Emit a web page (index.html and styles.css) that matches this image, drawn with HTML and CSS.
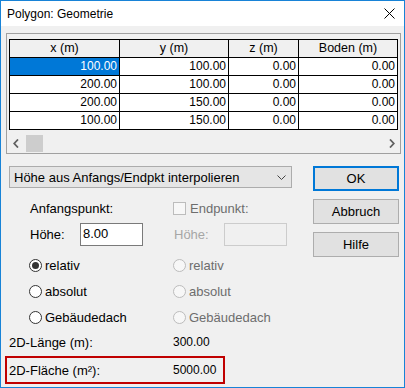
FILE: index.html
```html
<!DOCTYPE html>
<html lang="de">
<head>
  <meta charset="UTF-8" />
  <title>Polygon: Geometrie</title>
  <link rel="stylesheet" href="styles.css">
</head>
<body>
  <div class="window">
    <div class="titlebar">
      <span>Polygon: Geometrie</span>
      <svg class="close" width="11" height="11" viewBox="0 0 11 11">
        <path d="M0.5 0.5L10.5 10.5M10.5 0.5L0.5 10.5" stroke="#000" stroke-width="1" fill="none"/>
      </svg>
    </div>

    <div class="content">
      <div class="grid-box">
        <div class="table-wrap">
          <table class="points-table">
            <colgroup>
              <col style="width:110px"><col style="width:109px"><col style="width:70px"><col style="width:99px">
            </colgroup>
            <thead>
              <tr><th>x (m)</th><th>y (m)</th><th>z (m)</th><th>Boden (m)</th></tr>
            </thead>
            <tbody>
              <tr><td class="selected">100.00</td><td>100.00</td><td>0.00</td><td>0.00</td></tr>
              <tr><td>200.00</td><td>100.00</td><td>0.00</td><td>0.00</td></tr>
              <tr><td>200.00</td><td>150.00</td><td>0.00</td><td>0.00</td></tr>
              <tr><td>100.00</td><td>150.00</td><td>0.00</td><td>0.00</td></tr>
            </tbody>
          </table>
        </div>
        <div class="hscroll">
          <div class="arrow">
            <svg width="6" height="9" viewBox="0 0 6 9"><path d="M5 0.5L1.2 4.5L5 8.5" fill="none" stroke="#606060" stroke-width="1.8"/></svg>
          </div>
          <div class="thumb"></div>
          <div class="arrow right">
            <svg width="6" height="9" viewBox="0 0 6 9"><path d="M1 0.5L4.8 4.5L1 8.5" fill="none" stroke="#606060" stroke-width="1.8"/></svg>
          </div>
        </div>
      </div>

      <div class="lower">
        <div class="left">
          <div class="combo">
            <span>Höhe aus Anfangs/Endpkt interpolieren</span>
            <svg width="9" height="5" viewBox="0 0 9 5"><path d="M0.5 0.5L4.5 4.5L8.5 0.5" fill="none" stroke="#444" stroke-width="1"/></svg>
          </div>

          <div class="pt-row first">
            <span class="pad1">Anfangspunkt:</span>
            <label class="opt disabled"><span class="check"></span>Endpunkt:</label>
          </div>
          <div class="pt-row hoehe">
            <div class="field"><span class="field-label">Höhe:</span><span class="input">8.00</span></div>
            <div class="field disabled"><span class="field-label">Höhe:</span><span class="input off"></span></div>
          </div>
          <div class="pt-row gap11">
            <label class="opt"><span class="radio on"></span>relativ</label>
            <label class="opt disabled"><span class="radio"></span>relativ</label>
          </div>
          <div class="pt-row">
            <label class="opt"><span class="radio"></span>absolut</label>
            <label class="opt disabled"><span class="radio"></span>absolut</label>
          </div>
          <div class="pt-row">
            <label class="opt"><span class="radio"></span>Gebäudedach</label>
            <label class="opt disabled"><span class="radio"></span>Gebäudedach</label>
          </div>

          <div class="stat">
            <span>2D-Länge (m):</span>
            <span class="num">300.00</span>
          </div>
          <div class="stat marked">
            <span>2D-Fläche (m²):</span>
            <span class="num">5000.00</span>
          </div>
        </div>

        <div class="buttons">
          <button class="default">OK</button>
          <button>Abbruch</button>
          <button>Hilfe</button>
        </div>
      </div>
    </div>
  </div>
</body>
</html>
```

FILE: styles.css
```css
* {
  box-sizing: border-box;
}

body {
  margin: 0;
  font-family: "Liberation Sans", Arial, sans-serif;
  font-size: 13px;
  color: #000;
}

.window {
  width: 405px;
  height: 388px;
  border: 1px solid #1883d7;
  background-color: #f0f0f0;
}

.titlebar {
  height: 25px;
  background-color: #fff;
  display: flex;
  align-items: center;
  justify-content: space-between;
  padding: 0 9px 0 6px;
  font-size: 12px;
}

.content {
  padding: 7px 0 0 4px;
}

/* point list */
.grid-box {
  margin: 0 3px 0 1px;
  height: 121px;
  border: 1px solid #a0a0a0;
  background-color: #f0f0f0;
}

.table-wrap {
  height: 101px;
  padding: 5px 0 0 2px;
}

.points-table {
  border-collapse: collapse;
  table-layout: fixed;
  width: 388px;
  font-size: 12px;
}

.points-table th,
.points-table td {
  border: 1px solid #000;
  height: 18px;
  padding: 0 2px 0 0;
  line-height: 15px;
}

.points-table th {
  font-weight: normal;
  text-align: center;
  background-color: #f0f0f0;
  font-size: 12.5px;
  padding: 0;
}

.points-table td {
  text-align: right;
  background-color: #fff;
}

.points-table td.selected {
  background-color: #0078d7;
  color: #fff;
}

.hscroll {
  height: 17px;
  display: flex;
  background-color: #f0f0f0;
}

.hscroll .arrow {
  width: 17px;
  display: flex;
  align-items: center;
  justify-content: center;
}

.hscroll .arrow.right {
  margin-left: auto;
}

.hscroll .thumb {
  width: 17px;
  margin-left: 2px;
  background-color: #cdcdcd;
}

/* lower part */
.lower {
  display: flex;
  margin-top: 12px;
}

.left {
  width: 290px;
}

.combo {
  margin-left: 4px;
  width: 283px;
  height: 22px;
  border: 1px solid #acacac;
  background-color: #e5e5e5;
  display: flex;
  align-items: center;
  justify-content: space-between;
  padding: 0 5px 0 4px;
}

.pt-row {
  display: grid;
  grid-template-columns: 144px 1fr;
  align-items: center;
  height: 16px;
  margin: 10px 0 0 24px;
}

.pt-row.first {
  margin-top: 12px;
}

.pt-row.hoehe {
  height: 23px;
  margin-top: 7px;
}

.pt-row.gap11 {
  margin-top: 11px;
}

.pad1 {
  padding-left: 1px;
}

.opt {
  display: flex;
  align-items: center;
}

.opt.disabled {
  color: #6d6d6d;
}

.radio {
  width: 13px;
  height: 13px;
  border: 1px solid #333;
  border-radius: 50%;
  background-color: #fff;
  margin-right: 3px;
  display: flex;
  align-items: center;
  justify-content: center;
}

.radio.on::after {
  content: "";
  width: 7px;
  height: 7px;
  border-radius: 50%;
  background-color: #333;
}

.disabled .radio {
  border-color: #bcbcbc;
  background-color: #f7f7f7;
}

.check {
  width: 13px;
  height: 13px;
  border: 1px solid #bcbcbc;
  background-color: #f7f7f7;
  margin-right: 4px;
}

.field {
  display: flex;
  align-items: center;
}

.field-label {
  width: 51px;
  padding-left: 1px;
}

.field.disabled .field-label {
  color: #a6a6a6;
}

.input {
  width: 63px;
  height: 23px;
  border: 1px solid #7a7a7a;
  background-color: #fff;
  padding: 2px 0 0 2px;
  line-height: 16px;
}

.input.off {
  border-color: #cccccc;
  background-color: #f0f0f0;
}

.stat {
  display: grid;
  grid-template-columns: 164px 1fr;
  align-items: center;
  width: 220px;
  height: 16px;
  margin-top: 9px;
  padding-left: 4px;
}

.stat.marked {
  height: 28px;
  margin-top: 6px;
  padding-left: 2px;
  border: 2px solid #c00000;
}

.num {
  font-size: 12px;
}

.buttons {
  margin-left: auto;
  margin-right: 5px;
  width: 86px;
  display: flex;
  flex-direction: column;
  gap: 8px;
}

button {
  height: 25px;
  font-family: inherit;
  font-size: 13px;
  color: #000;
  background-color: #e1e1e1;
  border: 1px solid #adadad;
  padding: 0;
}

button.default {
  border: 2px solid #0078d7;
}
```
